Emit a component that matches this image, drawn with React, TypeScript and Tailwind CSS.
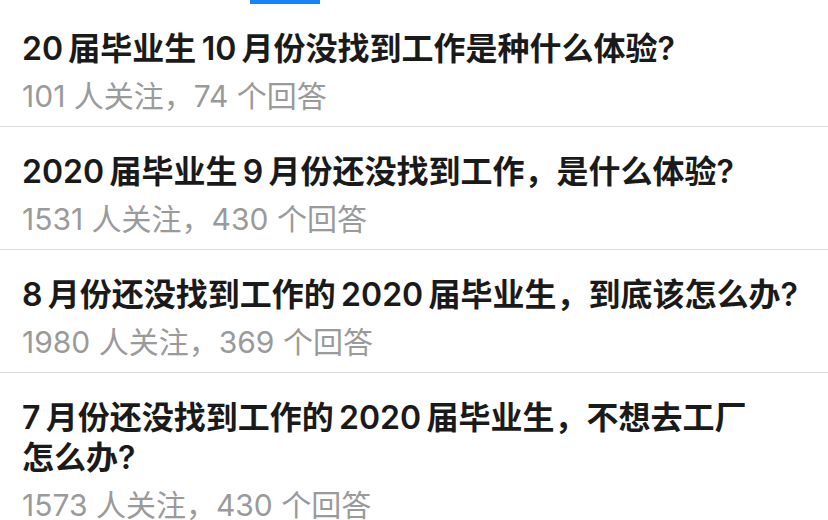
const questions = [
  { id: 1, title: '20\u2009届毕业生\u200910\u2009月份没找到工作是种什么体验?', follows: 101, answers: 74 },
  { id: 2, title: '2020\u2009届毕业生\u20099\u2009月份还没找到工作，是什么体验?', follows: 1531, answers: 430 },
  { id: 3, title: '8\u2009月份还没找到工作的\u20092020\u2009届毕业生，到底该怎么办?', follows: 1980, answers: 369 },
  { id: 4, title: '7\u2009月份还没找到工作的\u20092020\u2009届毕业生，不想去工厂\n怎么办?', follows: 1573, answers: 430 },
]

export default function App() {
  return (
    <div
      className="w-[828px] h-[520px] overflow-hidden bg-white"
      style={{ fontFamily: 'Inter, "Noto Sans CJK SC", sans-serif' }}
    >
      {/* tab indicator */}
      <div className="h-[4px] flex">
        <div className="ml-[250px] w-[70px] h-[4px] bg-[#1a82f7]" />
      </div>

      <div className="flex flex-col">
        {questions.map((q) => (
          <div key={q.id} className="border-b border-[#dcdcdc] px-[22px] pt-[25px] pb-[11px]">
            <div className="text-[32px] leading-[40px] font-semibold text-[#1a1a1a] whitespace-pre-line">
              {q.title}
            </div>
            <div className="mt-[8px] text-[30px] leading-[38px] text-[#9a9a9a]">
              {q.follows} 人关注，{q.answers} 个回答
            </div>
          </div>
        ))}
      </div>
    </div>
  )
}
